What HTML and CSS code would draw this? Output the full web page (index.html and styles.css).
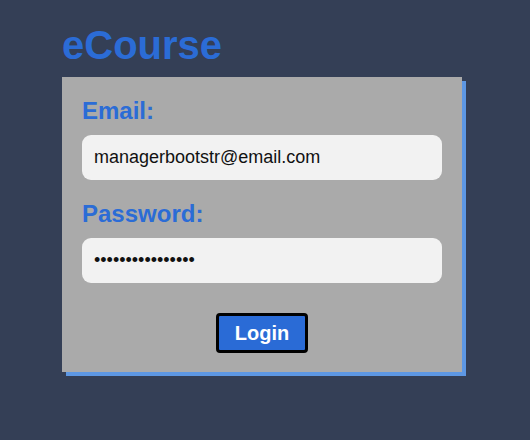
FILE: index.html
```html
<!DOCTYPE html>
<html>
<head>
<meta charset="utf-8">
<link rel="stylesheet" href="styles.css">
</head>
<body>
<main class="page">
  <h1 class="brand">eCourse</h1>
  <form class="card">
    <label class="label" for="email">Email:</label>
    <input class="field" id="email" type="text" value="managerbootstr@email.com">
    <label class="label label-gap" for="pw">Password:</label>
    <input class="field" id="pw" type="password" value="managerbootstr12">
    <div class="actions">
      <button class="btn" type="button">Login</button>
    </div>
  </form>
</main>
</body>
</html>
```

FILE: styles.css
```css
html, body {
  margin: 0;
  padding: 0;
  background: #343f56;
  font-family: "Liberation Sans", Arial, sans-serif;
}
.page {
  padding: 22px 0 60px 62px;
  display: flex;
  flex-direction: column;
  align-items: flex-start;
}
.brand {
  margin: 0;
  height: 55px;
  font-size: 40px;
  line-height: 46px;
  font-weight: bold;
  color: #2b6cd6;
}
.card {
  width: 400px;
  box-sizing: border-box;
  background: #aaaaaa;
  padding: 20px 20px 19px;
  margin: 0;
  box-shadow: 4px 4px 0 #5d97e3;
  display: flex;
  flex-direction: column;
}
.label {
  font-size: 24px;
  line-height: 28px;
  font-weight: bold;
  color: #2b6cd6;
  margin-bottom: 10px;
}
.label-gap {
  margin-top: 20px;
}
.field {
  height: 45px;
  box-sizing: border-box;
  border: none;
  border-radius: 9px;
  background: #f2f2f2;
  padding: 0 12px;
  font-family: "Liberation Sans", Arial, sans-serif;
  font-size: 18px;
  color: #111;
  outline: none;
}
.actions {
  display: flex;
  justify-content: center;
  margin-top: 30px;
}
.btn {
  width: 92px;
  height: 40px;
  box-sizing: border-box;
  border: 3px solid #000;
  border-radius: 4px;
  background: #2a6bd6;
  color: #fff;
  font-family: "Liberation Sans", Arial, sans-serif;
  font-size: 20px;
  font-weight: bold;
  padding: 0;
}
```
